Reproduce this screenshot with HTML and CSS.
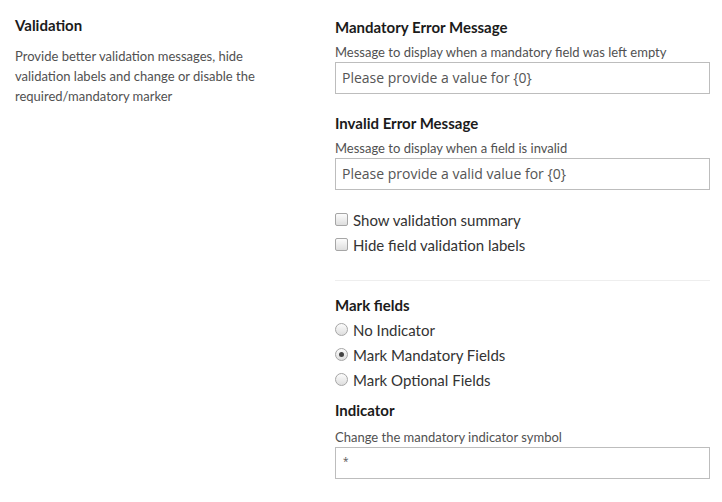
FILE: index.html
```html
<!DOCTYPE html>
<html>
<head>
<meta charset="utf-8">
<link rel="stylesheet" href="styles.css">
</head>
<body>
<div class="page">
  <div class="intro">
    <h2 class="intro-title">Validation</h2>
    <p class="intro-desc">Provide better validation messages, hide validation labels and change or disable the required/mandatory marker</p>
  </div>
  <div class="settings">
    <div class="field">
      <h3 class="field-title">Mandatory Error Message</h3>
      <div class="field-help">Message to display when a mandatory field was left empty</div>
      <div class="text-input">Please provide a value for {0}</div>
    </div>
    <div class="field">
      <h3 class="field-title">Invalid Error Message</h3>
      <div class="field-help">Message to display when a field is invalid</div>
      <div class="text-input">Please provide a valid value for {0}</div>
    </div>
    <div class="options checks">
      <label class="option"><span class="box"></span>Show validation summary</label>
      <label class="option"><span class="box"></span>Hide field validation labels</label>
    </div>
    <hr class="divider">
    <div class="field">
      <h3 class="field-title tight">Mark fields</h3>
      <div class="options">
        <label class="option"><span class="radio"></span>No Indicator</label>
        <label class="option"><span class="radio checked"></span>Mark Mandatory Fields</label>
        <label class="option"><span class="radio"></span>Mark Optional Fields</label>
      </div>
    </div>
    <div class="field indicator">
      <h3 class="field-title">Indicator</h3>
      <div class="field-help">Change the mandatory indicator symbol</div>
      <div class="text-input small">*</div>
    </div>
  </div>
</div>
</body>
</html>
```

FILE: styles.css
```css
html, body {
  margin: 0;
  padding: 0;
  background: #fff;
}
body {
  font-family: Lato, "Open Sans", sans-serif;
  color: #333;
}
.page {
  display: grid;
  grid-template-columns: 335px 375px;
  padding-right: 12px;
}
.intro {
  padding: 15px 0 0 15px;
}
.intro-title {
  margin: 0;
  font-size: 15px;
  line-height: 20px;
  font-weight: 700;
  color: #1b1b1b;
}
.intro-desc {
  margin: 11px 0 0;
  width: 280px;
  font-size: 13px;
  line-height: 20px;
  color: #515151;
}
.settings {
  padding-top: 17px;
}
.field + .field {
  margin-top: 19px;
}
.field-title {
  margin: 0 0 5px;
  font-size: 15px;
  line-height: 20px;
  font-weight: 700;
  color: #1b1b1b;
}
.field-title.tight {
  margin-bottom: 2px;
}
.field-help {
  font-size: 13px;
  line-height: 20px;
  color: #515151;
}
.text-input {
  box-sizing: border-box;
  height: 32px;
  border: 1px solid #bdbdbd;
  padding: 0 6px;
  font-family: "Open Sans", sans-serif;
  font-size: 14px;
  line-height: 30px;
  color: #555;
}
.text-input.small {
  font-size: 10px;
  padding-left: 7px;
  line-height: 26px;
}
.options {
  display: flex;
  flex-direction: column;
}
.checks {
  margin-top: 17px;
}
.option {
  display: flex;
  align-items: center;
  gap: 5px;
  height: 25px;
  font-size: 15px;
  color: #333;
}
.box, .radio {
  flex: none;
  width: 11px;
  height: 11px;
  border: 1px solid #a6a6a6;
  background: linear-gradient(#fcfcfc, #dedede);
}
.box {
  border-radius: 2px;
}
.radio {
  border-radius: 50%;
  position: relative;
}
.radio.checked::after {
  content: "";
  position: absolute;
  left: 3px;
  top: 3px;
  width: 5px;
  height: 5px;
  border-radius: 50%;
  background: #444;
}
.divider {
  margin: 23px 0 14px;
  border: 0;
  border-top: 1px solid #eee;
}
.field.indicator {
  margin-top: 8px;
}
.indicator .field-title {
  margin-bottom: 7px;
}
```
